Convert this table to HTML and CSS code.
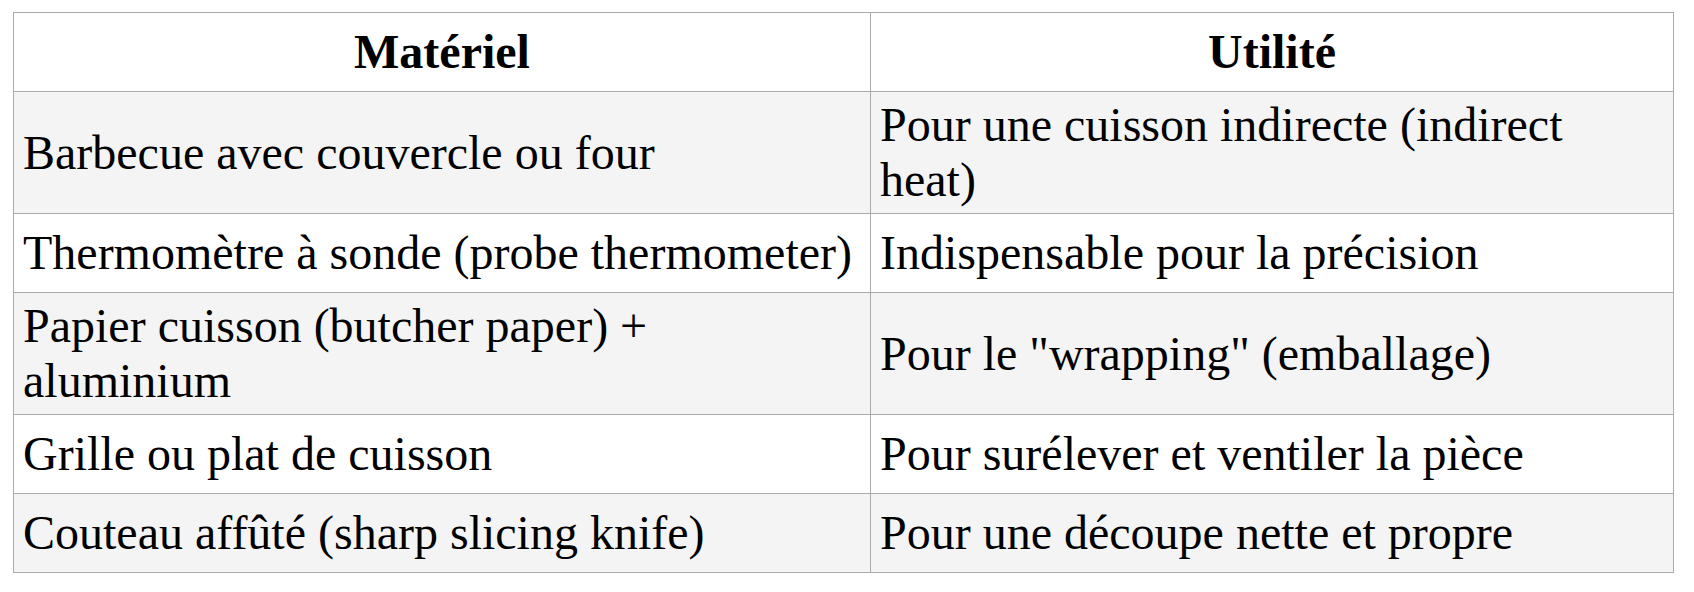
FILE: index.html
```html
<!DOCTYPE html>
<html lang="fr">
<head>
<meta charset="utf-8">
<title>Matériel</title>
<link rel="stylesheet" href="styles.css">
</head>
<body>
<table class="gear">
  <colgroup>
    <col class="c1">
    <col class="c2">
  </colgroup>
  <thead>
    <tr><th>Matériel</th><th>Utilité</th></tr>
  </thead>
  <tbody>
    <tr class="alt"><td>Barbecue avec couvercle ou four</td><td>Pour une cuisson indirecte (indirect heat)</td></tr>
    <tr><td>Thermomètre à sonde (probe thermometer)</td><td>Indispensable pour la précision</td></tr>
    <tr class="alt"><td>Papier cuisson (butcher paper) + aluminium</td><td>Pour le "wrapping" (emballage)</td></tr>
    <tr><td>Grille ou plat de cuisson</td><td>Pour surélever et ventiler la pièce</td></tr>
    <tr class="alt"><td>Couteau affûté (sharp slicing knife)</td><td>Pour une découpe nette et propre</td></tr>
  </tbody>
</table>
</body>
</html>
```
FILE: styles.css
```css
html, body {
  margin: 0;
  background: #ffffff;
}
body {
  padding: 12px 0 0 13px;
  font-family: "Liberation Serif", "Times New Roman", Tinos, Times, serif;
  color: #000;
}
.gear {
  border-collapse: collapse;
  table-layout: fixed;
  width: 1660px;
  font-family: "Liberation Serif", "Times New Roman", Tinos, Times, serif;
  font-size: 48px;
  line-height: 55px;
}
.c1 { width: 857px; }
.c2 { width: 803px; }
.gear th,
.gear td {
  border: 1px solid #aaaaaa;
  padding: 5px 9px 6px;
  height: 67px;
  vertical-align: middle;
  text-align: left;
}
.gear th {
  text-align: center;
  font-weight: bold;
}
.gear tr.alt td {
  background: #f4f4f4;
}
```
